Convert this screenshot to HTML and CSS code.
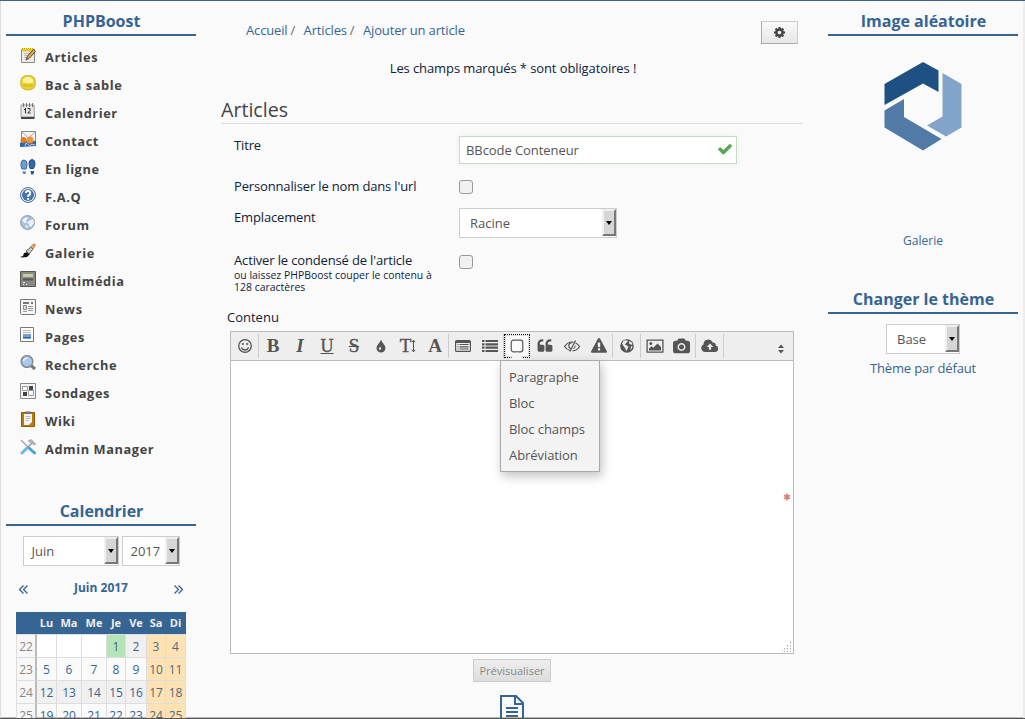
FILE: index.html
```html
<!DOCTYPE html>
<html lang="fr">
<head>
<meta charset="utf-8">
<title>Ajouter un article - PHPBoost</title>
<link rel="stylesheet" href="styles.css">
</head>
<body>
<div class="page">
  <aside class="side side-left">
    <h2 class="side-title">PHPBoost</h2>
    <ul class="menu">
      <li><svg viewBox="0 0 16 16"><path d="M1.5 2.5h13v13h-13z" fill="#ececea" stroke="#888a85"/><path d="M2 3h12" stroke="#e3c82c" stroke-width="3"/><path d="M2 1.5h12" stroke="#c4a000" stroke-dasharray="1 1"/><path d="M4 6.5h6M4 8.5h5M4 10.5h3" stroke="#bbb"/><path d="M6 13L7.500 9 13.500 2.500l2 2-6 6.500z" fill="#d8a860" stroke="#5a4220"/></svg>Articles</li>
      <li><svg viewBox="0 0 16 16"><path d="M5 .800h6q4 1 4.200 5v4q-.8 4.200-5 5H6q-4.500-.8-5.200-5V6Q1 2 5 .800z" fill="#e8d33c" stroke="#cbb01c"/><path d="M3 4l3-2h4l3 3v3H3z" fill="#fbf3a0"/><path d="M3 8q5 4 10 0l-1 4H4z" fill="#dfbf13"/></svg>Bac à sable</li>
      <li><svg viewBox="0 0 16 16"><path d="M1 2h13l.5 12H1z" fill="#e8e8e6" stroke="#999"/><path d="M1 15h13.500" stroke="#444" stroke-width="2"/><path d="M3.500 0v4M6.500 0v4M9.500 0v4M12.500 0v4" stroke="#777"/><path d="M5.500 5v5.500M4 6.500h1.500M7.500 5.500h2.500v2L7.800 10h2.700" stroke="#333" fill="none"/></svg>Calendrier</li>
      <li><svg viewBox="0 0 16 16"><path d="M1.500.5h14v12h-14z" fill="#f3f3f3" stroke="#888"/><path d="M2 1l6.500 6L15 1" fill="none" stroke="#aaa"/><path d="M0 16v-4l3-2h4l3 2 2-2h4v5z" fill="#3465a4"/><circle cx="3.500" cy="9" r="3" fill="#e07f22"/><circle cx="10" cy="9" r="3.500" fill="#ee9430"/><path d="M5 15l1-3 3 2M9 15q3-3 6-1" stroke="#b9d0ee" fill="none"/></svg>Contact</li>
      <li><svg viewBox="0 0 16 16"><path d="M4 1q3 0 3 4 0 3-1 5H2Q.500 7 1 4t3-3z" fill="#6f9bcd" stroke="#3f6ea8"/><path d="M2 12.500h4l-.5 2.500h-2z" fill="#4f80b8"/><path d="M12 .5q3 0 3 4 0 3-1.500 5H10Q9 7 9 4t3-3.500z" fill="#2f68ad" stroke="#234f88"/><path d="M10.500 12h3.500v2l-1 1.500h-2z" fill="#2b5c98"/></svg>En ligne</li>
      <li><svg viewBox="0 0 16 16"><circle cx="8" cy="8" r="7.400" fill="#fff" stroke="#35609b"/><circle cx="8" cy="8" r="6" fill="#4672ad"/><path d="M5.800 6Q6 4 8 4t2.200 2-2 2.500V10M8.200 11v2" fill="none" stroke="#fff" stroke-width="1.800"/></svg>F.A.Q</li>
      <li><svg viewBox="0 0 16 16"><circle cx="7.500" cy="7.500" r="6.900" fill="#a9c0de" stroke="#8696ad"/><path d="M2 5l4-3 2 1-2 3 1 2-3 0zM9 6l4-2 1 4-3 4-2-1 0-2-2-1zM5 10l3 1-1 3z" fill="#eef2f6"/></svg>Forum</li>
      <li><svg viewBox="0 0 16 16"><path d="M0 14l3-1 1-3 4-1 2 2-3 3-5 .5z" fill="#111"/><path d="M6 8l3 3 4-5-2-2z" fill="#c9c9c9" stroke="#444" stroke-width=".8"/><path d="M10.500 4L14 .5 15.500 2 13 6z" fill="#e8a765" stroke="#9a5a20" stroke-width=".6"/></svg>Galerie</li>
      <li><svg viewBox="0 0 16 16"><path d="M.5.500h15v15H.5z" fill="#888a85" stroke="#555753"/><path d="M3 3h10v3H3z" fill="#c9cfa0"/><path d="M3 8.500h10" stroke="#555" stroke-width="2"/><path d="M3 11.500h2M3 13.500h1M6 13.500h1" stroke="#eee"/></svg>Multimédia</li>
      <li><svg viewBox="0 0 16 16"><path d="M.5.500h15v14l-1 1h-13l-1-1z" fill="#f5f5f5" stroke="#777"/><path d="M3 4h6M11 4h2" stroke="#777" stroke-width="2"/><path d="M3.500 6.500h3v4h-3z" fill="#ddd" stroke="#888"/><path d="M8 7.500h5M8 9.500h5M3 12.500h4M8 11.500h5" stroke="#999"/></svg>News</li>
      <li><svg viewBox="0 0 16 16"><path d="M.5.500h13v14H.5z" fill="#fff" stroke="#777"/><path d="M3 3.500h8M3 5.500h8" stroke="#bbb"/><path d="M3 7h8v5H3z" fill="#729fcf"/><path d="M3 10.500h8" stroke="#3465a4"/></svg>Pages</li>
      <li><svg viewBox="0 0 16 16"><path d="M11 10.500l4 3.500" stroke="#777" stroke-width="3"/><circle cx="7" cy="6.500" r="5.800" fill="#a8c6ee" stroke="#888a8c" stroke-width="1.500"/><path d="M3.500 6q1-3 4-3" stroke="#e4effc" stroke-width="1.500" fill="none"/></svg>Recherche</li>
      <li><svg viewBox="0 0 16 16"><path d="M.5.500h15v15H.5z" fill="#f4f4f4" stroke="#888"/><path d="M9 3h4v4H9zM3 9h4v4H3z" fill="#3c4648"/><path d="M2.500 3.500h5v4h-5zM8.500 7.500h5v5h-5z" fill="#fff" stroke="#999"/></svg>Sondages</li>
      <li><svg viewBox="0 0 16 16"><path d="M1.500 1.500h13v14h-13z" fill="#b9791a" stroke="#8f5902"/><path d="M4 3h8v8l-3 3H4z" fill="#f4f4f4"/><path d="M5 .5h6V3H5z" fill="#777"/><path d="M5.500 5.500h5M5.500 7.500h5M5.500 9.500h3" stroke="#bbb"/></svg>Wiki</li>
      <li><svg viewBox="0 0 16 16"><path d="M1 1l8 8" stroke="#aaa" stroke-width="1.600"/><path d="M9 9l5.500 5" stroke="#4a9fdc" stroke-width="3" stroke-linecap="round"/><path d="M2 14l5-5" stroke="#6bb8ec" stroke-width="3" stroke-linecap="round"/><path d="M7 9l5-5" stroke="#999" stroke-width="1.600"/><path d="M8 2q3-3 5 0l3 3-2 1-3-2z" fill="#b5b5b5" stroke="#999" stroke-width=".5"/></svg>Admin Manager</li>
    </ul>
    <h2 class="side-title cal-title">Calendrier</h2>
    <div class="cal-form">
      <span class="select s-month"><span>Juin</span><i class="arrow"></i></span>
      <span class="select s-year"><span>2017</span><i class="arrow"></i></span>
    </div>
    <div class="cal-nav">
      <svg viewBox="0 0 9 9"><path d="M4.500.500l-4 4 4 4M8.500.500l-4 4 4 4"/></svg>
      <b>Juin 2017</b>
      <svg viewBox="0 0 9 9"><path d="M.500.500l4 4-4 4M4.500.500l4 4-4 4"/></svg>
    </div>
    <div class="cal">
      <b></b><b>Lu</b><b>Ma</b><b>Me</b><b>Je</b><b>Ve</b><b>Sa</b><b>Di</b>
      <i>22</i><span class="none"></span><span class="none"></span><span class="none"></span><span class="today">1</span><span class="alt">2</span><span class="we">3</span><span class="we">4</span>
      <i>23</i><span>5</span><span>6</span><span>7</span><span>8</span><span>9</span><span class="we">10</span><span class="we">11</span>
      <i>24</i><span class="alt">12</span><span class="alt">13</span><span class="alt">14</span><span class="alt">15</span><span class="alt">16</span><span class="we">17</span><span class="we">18</span>
      <i>25</i><span>19</span><span>20</span><span>21</span><span>22</span><span>23</span><span class="we">24</span><span class="we">25</span>
    </div>
  </aside>

  <main class="main">
    <div class="top">
      <nav class="crumbs"><a>Accueil</a><span>/</span><a>Articles</a><span>/</span><a>Ajouter un article</a></nav>
      <div class="cog"><svg viewBox="0 0 1792 1792"><path d="M1152 896q0-106-75-181t-181-75-181 75-75 181 75 181 181 75 181-75 75-181zm512-109v222q0 12-8 23t-20 13l-185 28q-19 54-39 91 35 50 107 138 10 12 10 25t-9 23q-27 37-99 108t-94 71q-12 0-26-9l-138-108q-44 23-91 38-16 136-29 186-7 28-36 28h-222q-14 0-24.500-8.500t-11.500-21.500l-28-184q-49-16-90-37l-141 107q-10 9-25 9-14 0-25-11-126-114-165-168-7-10-7-23 0-12 8-23 15-21 51-66.500t54-70.500q-27-50-41-99l-183-27q-13-2-21-12.500t-8-23.500v-222q0-12 8-23t19-13l186-28q14-46 39-92-40-57-107-138-10-12-10-24 0-10 9-23 26-36 98.500-107.500t94.500-71.500q13 0 26 10l138 107q44-23 91-38 16-136 29-186 7-28 36-28h222q14 0 24.500 8.500t11.500 21.500l28 184q49 16 90 37l142-107q9-9 24-9 13 0 25 10 129 119 165 170 7 8 7 22 0 12-8 23-15 21-51 66.500t-54 70.500q26 50 41 98l183 28q13 2 21 12.500t8 23.500z"/></svg></div>
    </div>
    <p class="notice">Les champs marqués * sont obligatoires !</p>
    <h1 class="legend">Articles</h1>
    <div class="row r1"><label>Titre</label><div class="input"><span>BBcode Conteneur</span><svg viewBox="0 0 1792 1792"><path d="M1671 566q0 40-28 68l-724 724-136 136q-28 28-68 28t-68-28l-136-136-362-362q-28-28-28-68t28-68l136-136q28-28 68-28t68 28l294 295 656-657q28-28 68-28t68 28l136 136q28 28 28 68z"/></svg></div></div>
    <div class="row r2"><label>Personnaliser le nom dans l'url</label><div class="check"></div></div>
    <div class="row r3"><label>Emplacement</label><span class="select s-cat"><span>Racine</span><i class="arrow"></i></span></div>
    <div class="row r4"><label>Activer le condensé de l'article<small>ou laissez PHPBoost couper le contenu à<br>128 caractères</small></label><div class="check"></div></div>
    <div class="content-label">Contenu</div>
    <div class="editor">
      <div class="toolbar">
        <div class="group"><div class="tool"><svg viewBox="0 0 18 18"><g fill="none" stroke="#555" stroke-width="1.300"><circle cx="9" cy="9" r="6.300"/><path d="M5.500 10.500q1 2.500 3.500 2.500t3.500-2.500"/></g><circle cx="6.800" cy="7" r="1.100"/><circle cx="11.200" cy="7" r="1.100"/></svg></div></div>
        <div class="group">
          <div class="tool letter">B</div><div class="tool letter it">I</div><div class="tool letter un">U</div><div class="tool letter st">S</div>
          <div class="tool"><svg viewBox="0 0 18 18"><path d="M9 2.500c.7 3 4.500 5.500 4.500 8.500a4.500 4.500 0 0 1-9 0c0-3 3.800-5.500 4.500-8.500z"/><path d="M8.200 9.500q1.500 2 .4 3.300-1.500.4-1.800-1z" fill="#eee"/></svg></div>
          <div class="tool letter size">T<svg viewBox="0 0 5 14"><path d="M2.500 1v12M.8 3.200l1.700-2 1.700 2M.8 10.800l1.700 2 1.700-2" fill="none" stroke="#555"/></svg></div>
          <div class="tool letter">A</div>
        </div>
        <div class="group">
          <div class="tool"><svg viewBox="0 0 18 18"><path d="M2.500 3h13q1.500 0 1.500 1.500v9q0 1.500-1.500 1.500h-13Q1 15 1 13.500v-9Q1 3 2.500 3zm-.3 3v7.800h13.600V6z" fill-rule="evenodd"/><path d="M3.500 7.500h1M5.500 7.500h9M3.500 9.800h1M5.500 9.800h9M3.500 12h1M5.500 12h9" stroke="#555" stroke-width="1.200"/></svg></div>
          <div class="tool"><svg viewBox="0 0 18 18"><path d="M1 4h2.500M4.500 4H17M1 7.300h2.500M4.500 7.300H17M1 10.700h2.500M4.500 10.700H17M1 14h2.500M4.500 14H17" stroke="#555" stroke-width="2.200"/></svg></div>
        </div>
        <div class="group">
          <div class="tool active"><svg viewBox="0 0 18 18"><rect x="3.200" y="3.200" width="11.600" height="11.600" rx="2.300" fill="none" stroke="#555" stroke-width="1.200"/></svg>
            <div class="menu-pop"><div>Paragraphe</div><div>Bloc</div><div>Bloc champs</div><div>Abréviation</div></div>
          </div>
          <div class="tool"><svg viewBox="0 0 1792 1792" class="fa"><path d="M832 960v384q0 80-56 136t-136 56h-384q-80 0-136-56t-56-136v-704q0-104 40.500-198.500t109.500-163.500 163.500-109.500 198.500-40.500h64q26 0 45 19t19 45v128q0 26-19 45t-45 19h-64q-106 0-181 75t-75 181v32q0 40 28 68t68 28h224q80 0 136 56t56 136zm896 0v384q0 80-56 136t-136 56h-384q-80 0-136-56t-56-136v-704q0-104 40.500-198.500t109.500-163.500 163.500-109.500 198.500-40.500h64q26 0 45 19t19 45v128q0 26-19 45t-45 19h-64q-106 0-181 75t-75 181v32q0 40 28 68t68 28h224q80 0 136 56t56 136z"/></svg></div>
          <div class="tool"><svg viewBox="0 0 18 18"><g fill="none" stroke="#555" stroke-width="1.200"><path d="M7 13.500Q3.500 12.500 1.500 9.500q3-4.500 7.500-4.500l1.500.2M12.500 6Q15 7 16.500 9.500 14 13.500 9.500 14M12.500 3.500l-5.500 11"/><path d="M7.800 11.800Q5.500 10.500 5.700 8q.5-2 2.800-2"/></g><path d="M12.500 8q.5 3-2.500 4z"/></svg></div>
          <div class="tool"><svg viewBox="0 0 1792 1792" class="fa"><path d="M1024 1375v-190q0-14-9.500-23.500t-22.500-9.500h-192q-13 0-22.500 9.500t-9.500 23.500v190q0 14 9.500 23.500t22.500 9.500h192q13 0 22.500-9.500t9.500-23.500zm-2-374l18-459q0-12-10-19-13-11-24-11h-220q-11 0-24 11-10 7-10 21l17 457q0 10 10 16.500t24 6.500h185q14 0 23.500-6.500t10.500-16.500zm-14-934l768 1408q35 63-2 126-17 29-46.500 46t-63.500 17h-1536q-34 0-63.500-17t-46.500-46q-37-63-2-126l768-1408q17-31 47-49t65-18 65 18 47 49z"/></svg></div>
        </div>
        <div class="group"><div class="tool"><svg viewBox="0 0 18 18"><circle cx="9" cy="9" r="6.800"/><path d="M7 3.300l2 .2.800 1.300L8 6l-1 1.800 2 .6 1.500 1.400-1 2-1.300 2.500-1-3L5.500 9 4 6.500 5.500 4zM11 4l2.500 1.200 1 2-1.500.6-1.800-1.300zM13 9.500l1.500-.5-.8 2.500-1.500 1.500z" fill="#eee"/></svg></div></div>
        <div class="group">
          <div class="tool"><svg viewBox="0 0 18 18"><path d="M1.100 3.100h15.800v12H1.100z" fill="none" stroke="#555" stroke-width="1.300"/><circle cx="4.800" cy="6.500" r="1.500"/><path d="M3 13.500v-2l2.500-2.300 1.800 1.500L11.500 6.500 15 10v3.500z"/></svg></div>
          <div class="tool"><svg viewBox="-64 -64 1920 1920" class="cam"><path d="M896 672q119 0 203.500 84.500t84.500 203.500-84.500 203.500-203.500 84.500-203.500-84.500-84.500-203.500 84.500-203.500 203.500-84.500zm704-416q106 0 181 75t75 181v896q0 106-75 181t-181 75h-1408q-106 0-181-75t-75-181v-896q0-106 75-181t181-75h224l51-136q19-49 69.500-84.500t103.500-35.500h512q53 0 103.500 35.500t69.500 84.500l51 136h224zm-704 1152q185 0 316.500-131.500t131.500-316.500-131.500-316.500-316.500-131.500-316.500 131.500-131.500 316.500 131.500 316.500 316.500 131.500z"/></svg></div>
        </div>
        <div class="group"><div class="tool"><svg viewBox="0 0 18 18"><path d="M4.300 15A3.900 3.900 0 0 1 2.500 7.600 4.800 4.800 0 0 1 11.700 5.500 2.600 2.600 0 0 1 14.700 8.500 3.300 3.300 0 0 1 14 15z"/><path d="M9 6.500l3.300 3.500h-2.200v2.800H7.900V10H5.700z" fill="#eee"/></svg></div></div>
        <svg class="sort" viewBox="0 0 8 10"><path d="M1 4l3-3.500L7 4zM1 6l3 3.500L7 6z"/></svg>
      </div>
      <div class="area"><svg class="req" viewBox="0 0 8 8"><path d="M4 .5v7M1 2.200l6 3.600M7 2.200L1 5.800"/></svg>
        <svg class="grip" viewBox="0 0 10 10"><path d="M8.500 0v10M5.500 3v7M2.500 6v4M0 9h1" stroke-dasharray="1.500 1.500"/></svg></div>
    </div>
    <div class="preview">Prévisualiser</div>
    <svg class="doc" viewBox="0 0 24 28"><path d="M1 1h15l7 7v19H1zM15 1v8h8M6 13h12M6 17h12M6 21h12" fill="none" stroke="#366493" stroke-width="2"/></svg>
  </main>

  <aside class="side side-right">
    <h2 class="side-title">Image aléatoire</h2>
    <svg class="logo" viewBox="0 0 78 90"><path d="M.500 23L39 1l15.500 8.500V31L39 22.500.500 44z" fill="#1e5083"/><path d="M58.500 12L77.500 23v43.500L62 75.500 43 64.500l15.500-9z" fill="#82a3ca"/><path d="M20 38v18l37.500 22L39 89.500.500 66.500V49.500z" fill="#517aa7"/></svg>
    <a class="gal">Galerie</a>
    <h2 class="side-title">Changer le thème</h2>
    <span class="select s-theme"><span>Base</span><i class="arrow"></i></span>
    <a class="def">Thème par défaut</a>
  </aside>
</div>
</body>
</html>
```
FILE: styles.css
```css
* { box-sizing: border-box; }
body { margin: 0; background: #fafafa; font: 13px/20px "Open Sans", "Noto Sans", sans-serif; color: #0f2139; }
h1, h2, p, ul { margin: 0; padding: 0; }
i { font-style: normal; }
svg { display: block; }
a { color: #366493; }

.page { height: 719px; overflow: hidden; display: flex; align-items: flex-start; border-top: 1px solid #366493; border-bottom: 1px solid #555; box-shadow: inset 1px 0 #ddd, inset -2px 0 #ececec, inset 0 -1px #bbb; }

.side { width: 190px; display: flex; flex-direction: column; align-items: center; }
.side-left { margin-left: 6px; }
.side-right { margin-left: 25px; }
.side-title { width: 190px; height: 35px; padding: 8px 0 0 1px; border-bottom: 2px solid #366493; font-size: 16px; line-height: 24px; font-weight: 700; color: #366493; text-align: center; }

.menu { width: 190px; list-style: none; padding-top: 10px; }
.menu li { display: flex; height: 28px; padding-left: 14px; gap: 9px; line-height: 23px; font-size: 12.8px; font-weight: 700; letter-spacing: .58px; color: #444; }
.menu svg { width: 16px; height: 16px; margin-top: 1px; }
.cal-title { margin-top: 24px; height: 36px; padding-top: 9px; }

.select { display: flex; justify-content: space-between; height: 30px; border: 1px solid #ccc; background: #fff; color: #555; line-height: 28px; flex: none; }
.select > span { padding-left: 8px; }
.arrow { width: 14px; margin-bottom: 1px; background: #d6d6d6; border: 2px solid; border-color: #eee #777 #777 #f0f0f0; display: flex; align-items: center; justify-content: center; }
.arrow::before { content: ""; border: 3px solid transparent; border-top: 4px solid #000; border-bottom: 0; }
.cal-form { display: flex; gap: 3px; margin-top: 10px; }
.s-month { width: 96px; }
.s-year { width: 58px; }
.s-cat { width: 158px; }
.s-cat > span { padding-left: 10px; }
.s-theme { width: 74px; margin-top: 10px; }
.s-theme > span { padding-left: 10px; }

.cal-nav { width: 165px; display: flex; justify-content: space-between; align-items: center; margin-top: 11px; height: 22px; font-size: 12px; color: #366493; }
.cal-nav svg { width: 9px; height: 9px; margin-top: 2px; fill: none; stroke: #366493; stroke-width: 1.300; }
.cal { width: 170px; margin-top: 13px; display: grid; grid-template-columns: 21px 20px 25px 25px 19px 21px 19px 20px; grid-template-rows: 22px repeat(4, 23px); font-size: 12px; line-height: 23px; text-align: center; color: #366493; }
.cal b { background: #366493; color: #eee; font-size: 11px; line-height: 21px; padding-right: 1px; }
.cal span, .cal i { border-top: 1px solid #ddd; border-right: 1px solid #ddd; }
.cal i { border-left: 1px solid #ddd; border-right: 2px solid #bbb; color: #888; background: #f7f7f7; }
.cal .none { background: #fff; }
.cal .today { background: #b5e4b7; }
.cal .alt { background: #f0f0f0; }
.cal .we { background: #ffe2b3; color: #4b6a80; }

.main { width: 582px; margin-left: 25px; display: flex; flex-direction: column; }
.top { display: flex; justify-content: space-between; height: 57px; padding: 20px 5px 0 25px; }
.crumbs { display: flex; height: 19px; line-height: 19px; letter-spacing: -.15px; }
.crumbs span { margin: 0 8.500px 0 3px; color: #666; }
.cog { width: 37px; height: 23px; display: grid; place-items: center; border: 1px solid #ccc; border-left-color: #aaa; border-bottom-color: #aaa; background: linear-gradient(#fafafa, #e6e6e6); }
.cog svg { width: 13px; height: 13px; fill: #444; }
.notice { height: 20px; text-align: center; padding-left: 2px; letter-spacing: -.1px; }
.legend { margin-top: 17px; height: 29px; border-bottom: 1px solid #ddd; font-size: 19.600px; line-height: 30px; font-weight: 400; color: #444; }
.row { display: flex; align-items: flex-start; padding-left: 13px; }
.row label { width: 225px; line-height: 18px; white-space: nowrap; letter-spacing: -.15px; }
.r1 { height: 53px; padding-top: 12px; }
.r2 { height: 31px; }
.r3 { height: 43px; }
.r4 { height: 56px; }
.row small { display: block; font-size: 10.4px; line-height: 12px; letter-spacing: .03px; }
.input { width: 278px; height: 28px; display: flex; justify-content: space-between; border: 1px solid #c3dcc3; background: #fff; box-shadow: 0 0 5px #eee; padding: 0 3px 0 6px; line-height: 26px; color: #555; letter-spacing: -.07px; }
.input svg { width: 16px; height: 16px; margin-top: 4px; fill: #5aa755; }
.check { width: 14px; height: 14px; margin-top: 4px; border: 1px solid #999; border-radius: 3px; background: #f1f1f1; }
.r2 .check { margin-top: 3px; }
.content-label { padding-left: 6px; height: 24px; line-height: 20px; }

.editor { width: 564px; height: 323px; margin-left: 9px; border: 1px solid #bbb; display: flex; flex-direction: column; background: #fff; }
.toolbar { height: 29px; display: flex; align-items: center; background: #eee; border-bottom: 1px solid #bbb; }
.group { display: flex; height: 24px; border-right: 1px solid #ccc; }
.tool { width: 27px; height: 24px; display: flex; align-items: center; justify-content: center; }
.tool svg { width: 18px; height: 18px; fill: #555; }
.tool .fa { width: 16px; height: 16px; }
.tool .cam { width: 17px; height: 17px; }
.letter { font: bold 19px/24px "Liberation Serif", serif; color: #555; padding-left: 1px; }
.it { font-style: italic; }
.un { font-size: 18px; font-weight: 400; -webkit-text-stroke: .4px #555; text-decoration: underline; text-decoration-thickness: 1px; }
.st { font-weight: 400; -webkit-text-stroke: .4px #555; text-decoration: line-through; text-decoration-thickness: 1px; }
.size { font-weight: 400; -webkit-text-stroke: .4px #555; }
.tool.size svg { width: 5px; height: 14px; }
.active { position: relative; border: 1px dotted #000; background: #fafafa; width: 26px; margin-right: 1px; box-shadow: inset 0 0 0 1px #ddd; }
.active::after { content: ""; position: absolute; left: 4px; top: 17px; border: 8px solid transparent; border-top: 0; border-bottom-color: #f3f3f3; z-index: 3; }
.menu-pop { position: absolute; left: -5px; top: 25px; width: 100px; height: 112px; padding: 3px 8px; background: #f3f3f3; border: 1px solid #aaa; box-shadow: 2px 4px 10px rgba(0,0,0,.25); z-index: 2; line-height: 26px; color: #555; white-space: nowrap; letter-spacing: -.07px; }
.sort { width: 8px; height: 10px; margin: 5px 8px 0 auto; fill: #555; }
.area { flex: 1; display: flex; flex-direction: column; justify-content: space-between; align-items: flex-end; padding: 132px 1px 1px; }
.req { width: 8px; height: 8px; margin-right: 1px; stroke: #d9807c; stroke-width: 1.800; }
.grip { width: 10px; height: 10px; stroke: #aaa; fill: none; }
.preview { align-self: center; width: 78px; height: 23px; margin-top: 5px; border: 1px solid #ccc; background: linear-gradient(#eee, #ddd); color: #888; font-size: 11px; line-height: 22px; text-align: center; }
.doc { align-self: center; width: 24px; height: 28px; flex: none; margin-top: 13px; }

.logo { width: 78px; height: 90px; margin-top: 25px; }
.gal { margin-top: 80px; font-size: 12px; height: 20px; }
.gal + .side-title { margin-top: 28px; }
.def { margin-top: 4px; letter-spacing: -.15px; }
```
